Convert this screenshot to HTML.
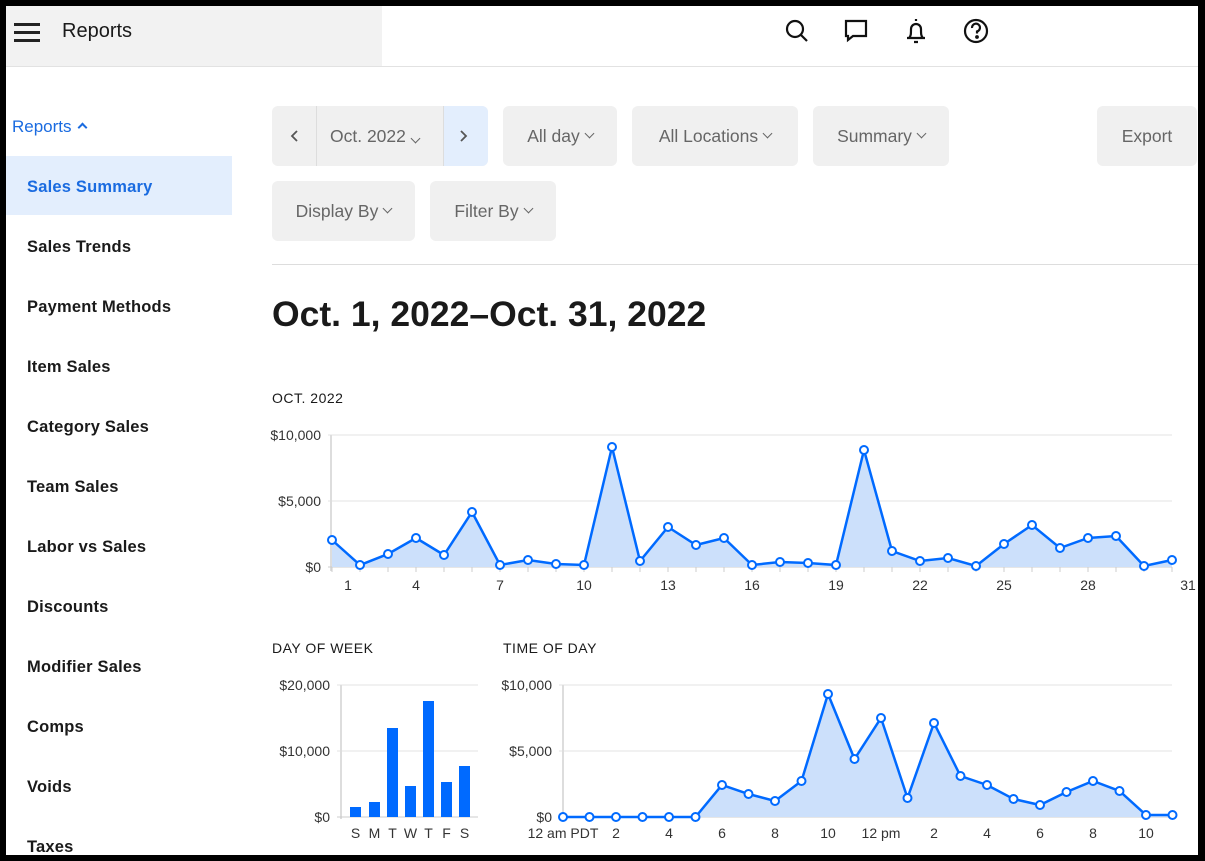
<!DOCTYPE html>
<html><head><meta charset="utf-8"><style>
*{margin:0;padding:0;box-sizing:border-box}
body{width:1205px;height:861px;background:#000;position:relative;overflow:hidden;font-family:"Liberation Sans",sans-serif;color:#1a1a1a}
#pg{position:absolute;left:6px;top:6px;width:1192px;height:849px;background:#fff;overflow:hidden}
.a{position:absolute}
.btn{position:absolute;background:#f0f0f0;border-radius:6px;color:#666;font-size:17.5px;display:flex;align-items:center;justify-content:center}
.nav{position:absolute;left:21px;font-size:16.5px;font-weight:bold;color:#1a1a1a;letter-spacing:.2px}
.chev{display:inline-block;width:7px;height:7px;border-right:1.6px solid #666;border-bottom:1.6px solid #666;transform:rotate(45deg);margin-left:6px;margin-top:-5px}
</style></head><body><div id="pg">
<div class="a" style="left:0;top:0;width:376px;height:60px;background:#f2f2f2"></div>
<div class="a" style="left:0;top:60px;width:1192px;height:1px;background:#e2e2e2"></div>
<div class="a" style="left:8px;top:17px;width:26px;height:3px;background:#222;box-shadow:0 8px 0 #222,0 16px 0 #222"></div>
<div class="a" style="left:56px;top:14px;font-size:20px;color:#1a1a1a">Reports</div>
<svg class="a" style="left:770px;top:10px" width="230" height="40" fill="none" stroke="#111" stroke-width="2.2">
<circle cx="19" cy="13" r="8"/><path d="M25 19l6 6"/>
<path d="M70 5h20v15h-13l-5 4v-4h-2z"/>
<path d="M131 22h18M133 22c2-2 2-4 2-9a5 5 0 0 1 10 0c0 5 0 7 2 9M138 26h4M140 3v2"/>
<circle cx="200" cy="15" r="11"/><path d="M196 12a4 4 0 1 1 5 3.5v2" /><circle cx="201" cy="21" r="0.8" fill="#111"/>
</svg>
<div class="a" style="left:6px;top:111px;font-size:17px;color:#1a6be0">Reports <span style="display:inline-block;width:7px;height:7px;border-left:2px solid #1a6be0;border-top:2px solid #1a6be0;transform:rotate(45deg);margin-left:3px;margin-bottom:1px"></span></div>
<div class="a" style="left:0;top:150px;width:226px;height:59px;background:#e3eefd"></div>
<div class="nav" style="top:172px;color:#1a6be0">Sales Summary</div>
<div class="nav" style="top:232px">Sales Trends</div>
<div class="nav" style="top:292px">Payment Methods</div>
<div class="nav" style="top:352px">Item Sales</div>
<div class="nav" style="top:412px">Category Sales</div>
<div class="nav" style="top:472px">Team Sales</div>
<div class="nav" style="top:532px">Labor vs Sales</div>
<div class="nav" style="top:592px">Discounts</div>
<div class="nav" style="top:652px">Modifier Sales</div>
<div class="nav" style="top:712px">Comps</div>
<div class="nav" style="top:772px">Voids</div>
<div class="nav" style="top:832px">Taxes</div>

<div class="btn" style="left:266px;top:100px;width:216px;height:60px;justify-content:flex-start"></div>
<div class="a" style="left:310px;top:100px;width:1px;height:60px;background:#ddd"></div>
<div class="a" style="left:437px;top:100px;width:45px;height:60px;background:#e3eefd;border-radius:0 6px 6px 0;border-left:1px solid #ddd"></div>
<svg class="a" style="left:280px;top:120px" width="190" height="20" fill="none" stroke="#555" stroke-width="1.8"><path d="M11 5l-5 5 5 5"/><path d="M175 5l5 5-5 5"/></svg>
<div class="a" style="left:324px;top:120px;font-size:17.5px;color:#666">Oct. 2022<span class="chev"></span></div>
<div class="btn" style="left:497px;top:100px;width:114px;height:60px">All day<span class="chev"></span></div>
<div class="btn" style="left:626px;top:100px;width:166px;height:60px">All Locations<span class="chev"></span></div>
<div class="btn" style="left:807px;top:100px;width:136px;height:60px">Summary<span class="chev"></span></div>
<div class="btn" style="left:1091px;top:100px;width:100px;height:60px">Export</div>
<div class="btn" style="left:266px;top:175px;width:143px;height:60px">Display By<span class="chev"></span></div>
<div class="btn" style="left:424px;top:175px;width:126px;height:60px">Filter By<span class="chev"></span></div>
<div class="a" style="left:266px;top:258px;width:926px;height:1px;background:#ddd"></div>
<div class="a" style="left:266px;top:288px;font-size:35.5px;font-weight:bold;color:#1a1a1a">Oct. 1, 2022–Oct. 31, 2022</div>
<div class="a" style="left:266px;top:384px;font-size:14px;letter-spacing:.5px">OCT. 2022</div>
<div class="a" style="left:266px;top:634px;font-size:14px;letter-spacing:.5px">DAY OF WEEK</div>
<div class="a" style="left:497px;top:634px;font-size:14px;letter-spacing:.5px">TIME OF DAY</div>
</div>
<svg class="a" id="ch" style="position:absolute;left:0;top:0" width="1205" height="855" font-family="Liberation Sans,sans-serif" font-size="14" fill="#333"></svg>
<script>
var s='';
function t(x,y,v,a){s+='<text x="'+x+'" y="'+y+'" text-anchor="'+(a||'middle')+'" fill="#333">'+v+'</text>';}
function l(x1,y1,x2,y2,c,w){s+='<line x1="'+x1+'" y1="'+y1+'" x2="'+x2+'" y2="'+y2+'" stroke="'+c+'" stroke-width="'+(w||1)+'"/>';}
function line(xs,ys,base){var p=xs.map(function(x,i){return x+','+ys[i]}).join(' ');
s+='<polygon points="'+xs[0]+','+base+' '+p+' '+xs[xs.length-1]+','+base+'" fill="#cce0fb"/>';
s+='<polyline points="'+p+'" fill="none" stroke="#006aff" stroke-width="2.5"/>';
xs.forEach(function(x,i){s+='<circle cx="'+x+'" cy="'+ys[i]+'" r="4" fill="#fff" stroke="#006aff" stroke-width="2"/>'});}
l(328,435,1172,435,'#e3e3e3');l(328,501,1172,501,'#e3e3e3');l(331,435,331,571,'#ddd',2);l(328,567,1172,567,'#ccc');
t(321,440,'$10,000','end');t(321,506,'$5,000','end');t(321,572,'$0','end');
var ys=[540,565,554,538,555,512,565,560,564,565,447,561,527,545,538,565,562,563,565,450,551,561,558,566,544,525,548,538,536,566,560],xs=[];
for(var i=0;i<31;i++){xs.push(332+28*i);l(332+28*i,567,332+28*i,572,'#ccc');}
line(xs,ys,567);
[[348,'1'],[416,'4'],[500,'7'],[584,'10'],[668,'13'],[752,'16'],[836,'19'],[920,'22'],[1004,'25'],[1088,'28'],[1188,'31']].forEach(function(a){t(a[0],590,a[1])});
l(337,685,478,685,'#e3e3e3');l(337,751,478,751,'#e3e3e3');l(341,685,341,819,'#ddd',2);l(337,817,478,817,'#ccc');
t(330,690,'$20,000','end');t(330,756,'$10,000','end');t(330,822,'$0','end');
[[350,807,'S'],[369,802,'M'],[387,728,'T'],[405,786,'W'],[423,701,'T'],[441,782,'F'],[459,766,'S']].forEach(function(b){s+='<rect x="'+b[0]+'" y="'+b[1]+'" width="11" height="'+(817-b[1])+'" fill="#006aff"/>';t(b[0]+5.5,838,b[2]);});
l(559,685,1172,685,'#e3e3e3');l(559,751,1172,751,'#e3e3e3');l(563,685,563,819,'#ddd',2);l(559,817,1172,817,'#ccc');
t(552,690,'$10,000','end');t(552,756,'$5,000','end');t(552,822,'$0','end');
var ty=[817,817,817,817,817,817,785,794,801,781,694,759,718,798,723,776,785,799,805,792,781,791,815,815],tx=[];
for(var h=0;h<24;h++){tx.push(563+26.5*h);}
line(tx,ty,817);
[[563,'12 am PDT'],[616,'2'],[669,'4'],[722,'6'],[775,'8'],[828,'10'],[881,'12 pm'],[934,'2'],[987,'4'],[1040,'6'],[1093,'8'],[1146,'10']].forEach(function(a){t(a[0],838,a[1])});
document.getElementById('ch').innerHTML=s;
</script>
</body></html>
